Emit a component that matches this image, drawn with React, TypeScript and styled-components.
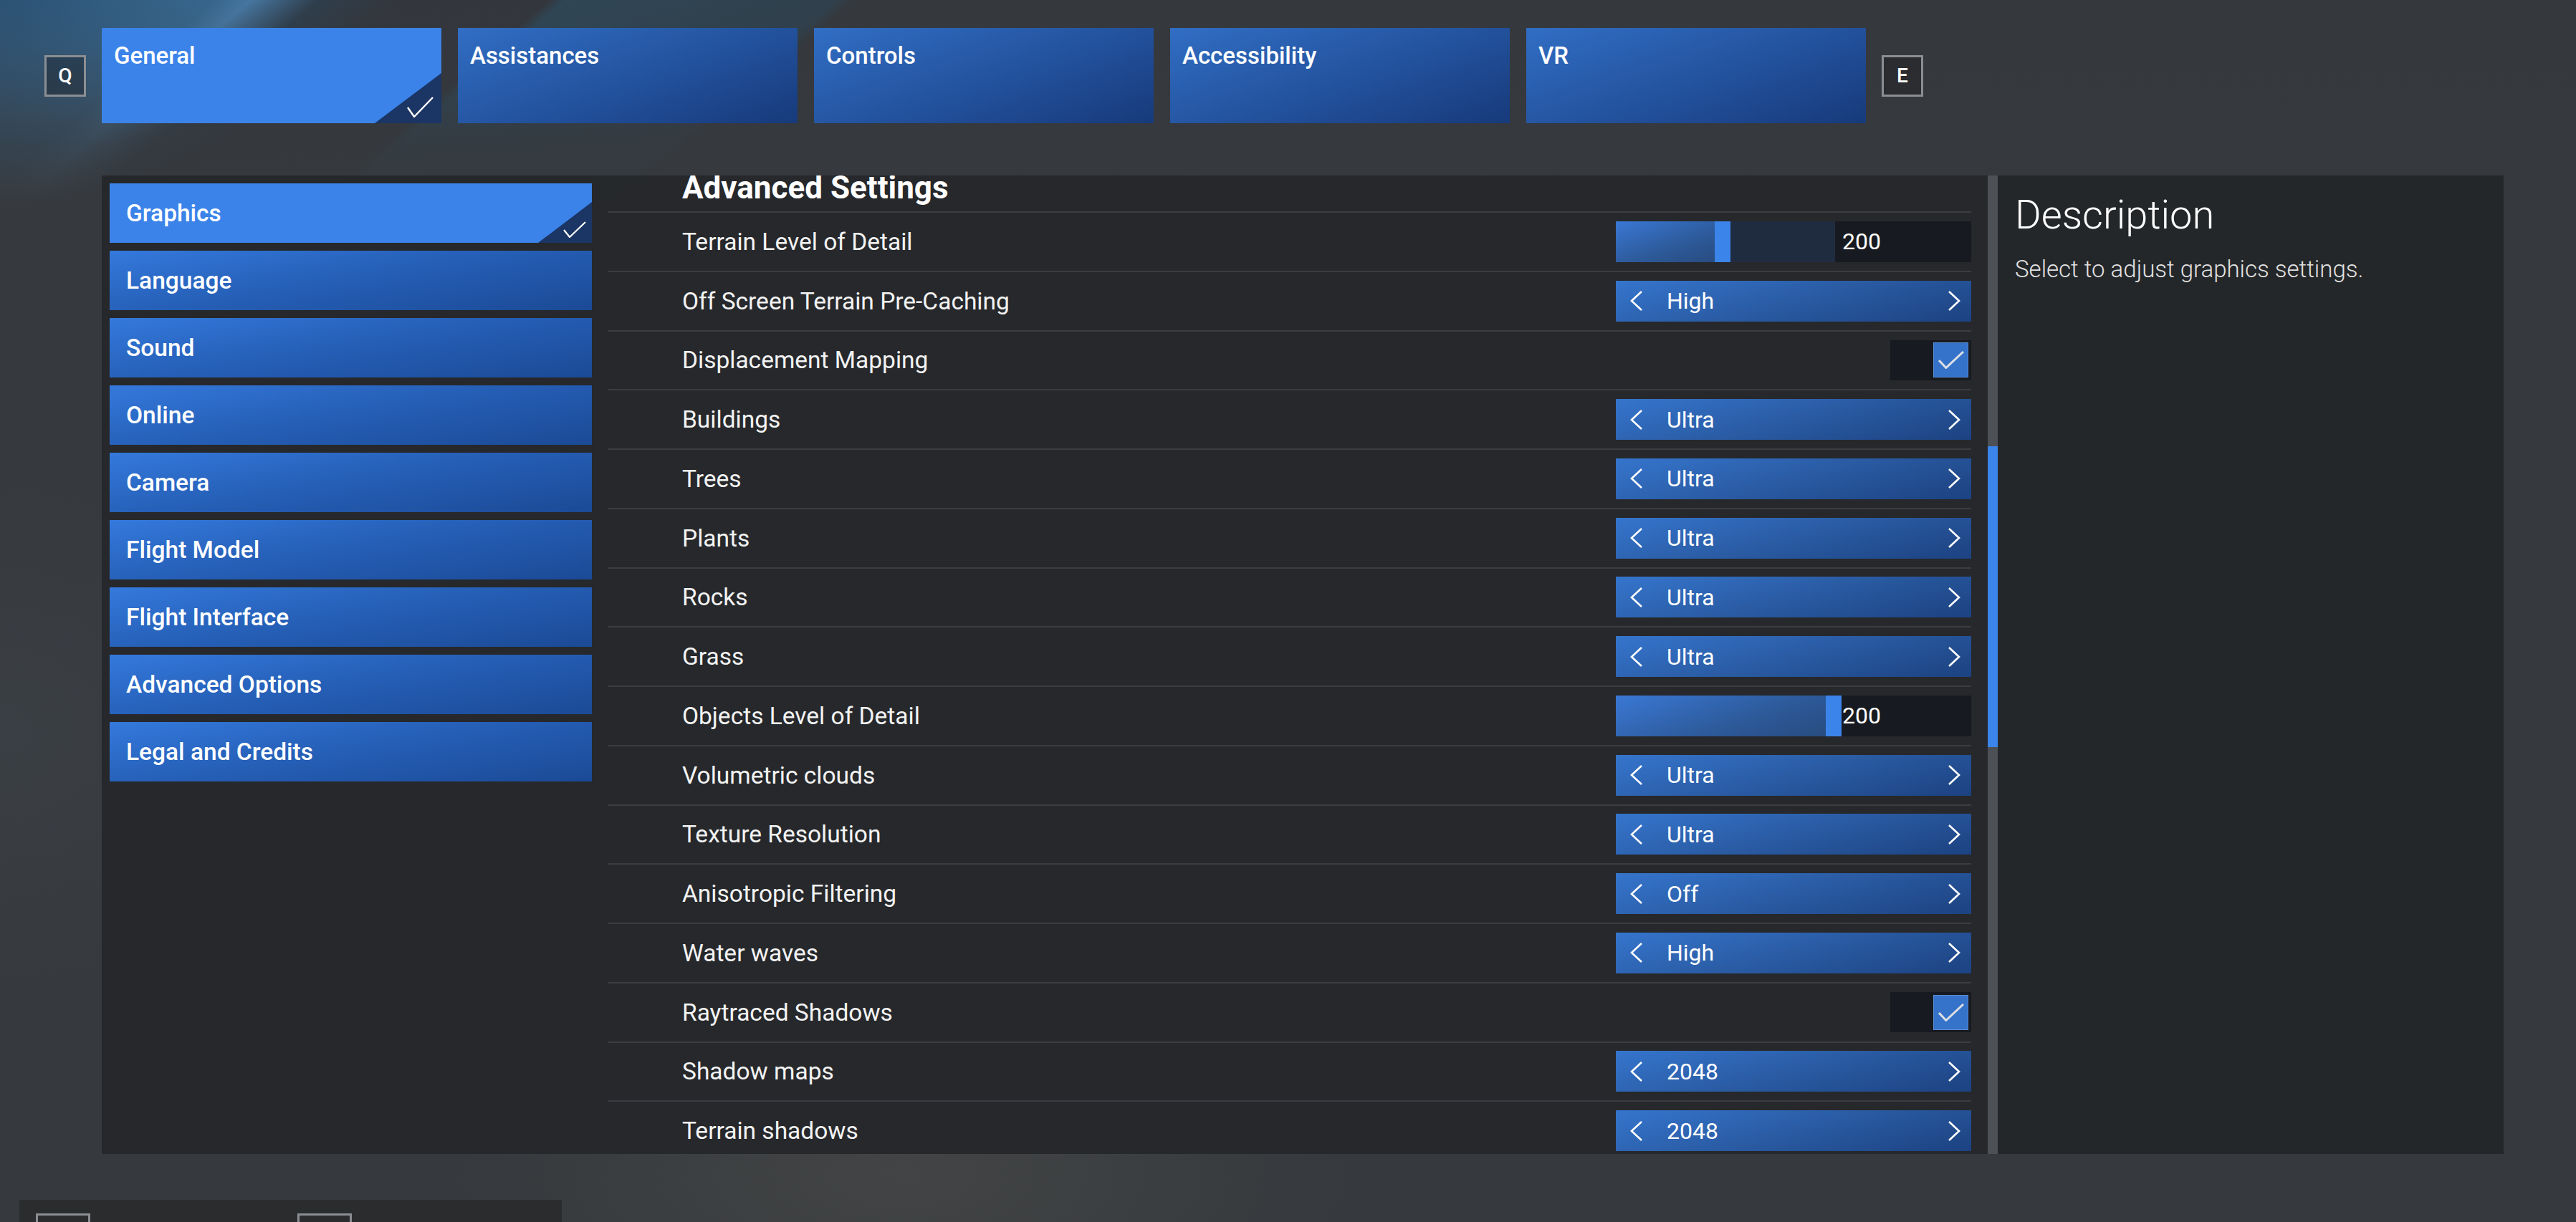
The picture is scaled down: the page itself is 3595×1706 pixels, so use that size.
import * as React from 'react';
import styled, { createGlobalStyle } from 'styled-components';

const GlobalStyle = createGlobalStyle`
  html, body {
    margin: 0;
    padding: 0;
  }
  body {
    background: #36393d;
    font-family: Roboto, 'Liberation Sans', sans-serif;
    color: #fff;
    overflow: hidden;
  }
`;

const Screen = styled.div`
  width: 3595px;
  height: 1706px;
  overflow: hidden;
  display: flex;
  flex-direction: column;
  background:
    radial-gradient(ellipse 900px 420px at 35% 96%, rgba(92, 92, 86, 0.32), transparent 70%),
    radial-gradient(ellipse 700px 300px at 52% 25%, rgba(80, 80, 78, 0.22), transparent 70%),
    radial-gradient(ellipse 600px 500px at 0% 60%, rgba(70, 78, 86, 0.3), transparent 70%),
    linear-gradient(180deg, rgba(54, 57, 61, 0) 0px, rgba(54, 57, 61, 0.15) 60px, rgba(54, 57, 61, 0.75) 200px, #36393d 290px),
    linear-gradient(
      139deg,
      #2c5273 0%,
      #37668d 5.4%,
      #4676a0 6.3%,
      #2f3e4c 8%,
      #33373d 10%,
      #33373d 13.8%,
      #2f4656 14.2%,
      #30404c 21%,
      #35383c 21.5%,
      #35383c 100%
    );
`;

/* ---------- top tabs ---------- */

const TopBar = styled.div`
  display: flex;
  align-items: center;
  gap: 22px;
  padding: 39px 0 0 62px;
`;

const KeyBox = styled.div`
  width: 58px;
  height: 58px;
  box-sizing: border-box;
  border: 3px solid #8b8e92;
  background: rgba(22, 24, 27, 0.35);
  display: flex;
  align-items: center;
  justify-content: center;
  font-size: 28px;
  font-weight: 500;
  color: #fff;
`;

const TabRow = styled.div`
  display: flex;
  gap: 23px;
`;

const Tab = styled.div<{ $active?: boolean }>`
  position: relative;
  width: 474px;
  height: 133px;
  box-sizing: border-box;
  padding: 19px 17px;
  font-size: 33px;
  font-weight: 500;
  line-height: 1.2;
  color: #fff;
  background: ${(p) =>
    p.$active ? '#3b83e9' : 'linear-gradient(160deg, #316ec4 0%, #2454a0 50%, #173a7b 100%)'};
  overflow: hidden;
`;

const Corner = styled.div<{ $w: number; $h: number }>`
  position: absolute;
  right: 0;
  bottom: 0;
  width: ${(p) => p.$w}px;
  height: ${(p) => p.$h}px;
  background: #1b3564;
  clip-path: polygon(100% 0, 100% 100%, 0 100%);
`;

const CornerCheck = styled.svg<{ $r: number; $b: number }>`
  position: absolute;
  right: ${(p) => p.$r}px;
  bottom: ${(p) => p.$b}px;
`;

/* ---------- main area ---------- */

const Main = styled.div`
  display: flex;
  margin: 73px 0 0 142px;
  height: 1366px;
`;

const Panel = styled.div`
  display: flex;
  width: 2646px;
  background: rgba(37, 39, 42, 0.93);
`;

const Nav = styled.nav`
  width: 706px;
  box-sizing: border-box;
  padding: 11px 22px 0 11px;
  display: flex;
  flex-direction: column;
  gap: 11px;
`;

const NavItem = styled.div<{ $active?: boolean }>`
  position: relative;
  height: 83px;
  flex: 0 0 83px;
  display: flex;
  align-items: center;
  padding-left: 23px;
  font-size: 33.5px;
  font-weight: 500;
  color: #fff;
  background: ${(p) =>
    p.$active ? '#3b83e9' : 'linear-gradient(170deg, #3479dc 0%, #2660b8 45%, #1b4a96 100%)'};
  overflow: hidden;
`;

const Settings = styled.div`
  width: 1903px;
  overflow: hidden;
  display: flex;
  flex-direction: column;
`;

const SectionHeader = styled.div`
  height: 50px;
  flex: 0 0 50px;
  overflow: hidden;
  border-bottom: 2px solid #3b3e42;
  padding-left: 104px;
`;

const SectionTitle = styled.div`
  margin-top: -5px;
  font-size: 44px;
  line-height: 44px;
  font-weight: 700;
  color: #fff;
`;

const Row = styled.div`
  height: 80.75px;
  flex: 0 0 80.75px;
  border-bottom: 2px solid #3a3d41;
  display: flex;
  align-items: center;
  justify-content: space-between;
  padding-left: 104px;
  font-size: 33.5px;
  color: #f3f3f3;
`;

const Selector = styled.div`
  width: 496px;
  height: 57px;
  box-sizing: border-box;
  display: flex;
  align-items: center;
  padding: 0 15px 0 20px;
  background: linear-gradient(165deg, #3575cd 0%, #2a5ba3 50%, #1c4281 100%);
`;

const SelectValue = styled.span`
  flex: 1;
  margin-left: 33px;
  font-size: 32px;
  color: #fff;
`;

const Slider = styled.div`
  width: 496px;
  height: 57px;
  display: flex;
`;

const Track = styled.div`
  position: relative;
  z-index: 1;
  flex: 0 0 306px;
  background: #1f2c40;
`;

const Fill = styled.div`
  position: absolute;
  left: 0;
  top: 0;
  bottom: 0;
  background: linear-gradient(160deg, #3a78d5 0%, #2d5a9a 60%, #284c80 100%);
`;

const Thumb = styled.div`
  position: absolute;
  top: 0;
  bottom: 0;
  width: 22px;
  background: #3b84ea;
`;

const ValueBox = styled.div`
  flex: 1;
  display: flex;
  align-items: center;
  padding-left: 10px;
  background: #171a20;
  font-size: 32px;
  color: #fff;
`;

const CheckWell = styled.div`
  width: 113px;
  height: 56px;
  box-sizing: border-box;
  padding-right: 4px;
  display: flex;
  align-items: center;
  justify-content: flex-end;
  background: #171a20;
`;

const CheckBox = styled.div`
  width: 49px;
  height: 49px;
  box-sizing: border-box;
  border: 1px solid #5d8ed6;
  background: #3572ca;
  display: flex;
  align-items: center;
  justify-content: center;
`;

const ScrollTrack = styled.div`
  margin-left: 23px;
  width: 14px;
  flex: 0 0 14px;
  background: #4d5054;
`;

const ScrollThumb = styled.div<{ $top: number; $h: number }>`
  margin-top: ${(p) => p.$top}px;
  height: ${(p) => p.$h}px;
  background: #3b84ea;
`;

const Description = styled.aside`
  width: 706px;
  box-sizing: border-box;
  padding: 22px 24px;
  background: rgba(36, 38, 41, 0.95);
`;

const DescTitle = styled.div`
  font-size: 56px;
  font-weight: 300;
  line-height: 1.2;
  color: #fff;
`;

const DescText = styled.div`
  margin-top: 22px;
  font-size: 33px;
  font-weight: 300;
  line-height: 1.2;
  color: #e2e2e2;
`;

/* ---------- bottom bar ---------- */

const BottomBar = styled.div`
  margin: 64px 0 0 27px;
  width: 757px;
  height: 80px;
  box-sizing: border-box;
  padding: 19px 0 0 23px;
  display: flex;
  gap: 289px;
  background: #2a2c2e;
`;

const BottomKey = styled.div`
  width: 76px;
  height: 60px;
  box-sizing: border-box;
  border: 3px solid #8b8e92;
`;

/* ---------- parts ---------- */

const Chevron: React.FC<{ dir: 'left' | 'right' }> = ({ dir }) => (
  <svg width="18" height="28" viewBox="0 0 18 28">
    <polyline
      points={dir === 'left' ? '16,1 2,14 16,27' : '2,1 16,14 2,27'}
      fill="none"
      stroke="#fff"
      strokeWidth="2.6"
    />
  </svg>
);

const Tick: React.FC<{ w: number; h: number; color?: string; sw?: number }> = ({ w, h, color = '#fff', sw = 2.5 }) => (
  <svg width={w} height={h} viewBox={`0 0 ${w} ${h}`}>
    <polyline
      points={`1,${h * 0.52} ${w * 0.3},${h - 1.5} ${w - 1},1`}
      fill="none"
      stroke={color}
      strokeWidth={sw}
    />
  </svg>
);

type Setting =
  | { label: string; kind: 'select'; value: string }
  | { label: string; kind: 'slider'; value: string; thumb: number }
  | { label: string; kind: 'check' };

const settings: Setting[] = [
  { label: 'Terrain Level of Detail', kind: 'slider', value: '200', thumb: 138 },
  { label: 'Off Screen Terrain Pre-Caching', kind: 'select', value: 'High' },
  { label: 'Displacement Mapping', kind: 'check' },
  { label: 'Buildings', kind: 'select', value: 'Ultra' },
  { label: 'Trees', kind: 'select', value: 'Ultra' },
  { label: 'Plants', kind: 'select', value: 'Ultra' },
  { label: 'Rocks', kind: 'select', value: 'Ultra' },
  { label: 'Grass', kind: 'select', value: 'Ultra' },
  { label: 'Objects Level of Detail', kind: 'slider', value: '200', thumb: 293 },
  { label: 'Volumetric clouds', kind: 'select', value: 'Ultra' },
  { label: 'Texture Resolution', kind: 'select', value: 'Ultra' },
  { label: 'Anisotropic Filtering', kind: 'select', value: 'Off' },
  { label: 'Water waves', kind: 'select', value: 'High' },
  { label: 'Raytraced Shadows', kind: 'check' },
  { label: 'Shadow maps', kind: 'select', value: '2048' },
  { label: 'Terrain shadows', kind: 'select', value: '2048' },
];

const tabs = ['General', 'Assistances', 'Controls', 'Accessibility', 'VR'];
const navItems = [
  'Graphics',
  'Language',
  'Sound',
  'Online',
  'Camera',
  'Flight Model',
  'Flight Interface',
  'Advanced Options',
  'Legal and Credits',
];

const Control: React.FC<{ s: Setting }> = ({ s }) => {
  if (s.kind === 'select') {
    return (
      <Selector>
        <Chevron dir="left" />
        <SelectValue>{s.value}</SelectValue>
        <Chevron dir="right" />
      </Selector>
    );
  }
  if (s.kind === 'slider') {
    return (
      <Slider>
        <Track>
          <Fill style={{ width: s.thumb }} />
          <Thumb style={{ left: s.thumb }} />
        </Track>
        <ValueBox>{s.value}</ValueBox>
      </Slider>
    );
  }
  return (
    <CheckWell>
      <CheckBox>
        <Tick w={36} h={25} color="#dcdfe4" sw={3} />
      </CheckBox>
    </CheckWell>
  );
};

const App: React.FC = () => {
  return (
    <>
      <GlobalStyle />
      <Screen>
        <TopBar>
          <KeyBox>Q</KeyBox>
          <TabRow>
            {tabs.map((t, i) => (
              <Tab key={t} $active={i === 0}>
                {t}
                {i === 0 && (
                  <>
                    <Corner $w={93} $h={70} />
                    <CornerCheck $r={11} $b={8} width="37" height="29" viewBox="0 0 37 29">
                      <polyline points="1,15 10,28 36,1" fill="none" stroke="#fff" strokeWidth="2.4" />
                    </CornerCheck>
                  </>
                )}
              </Tab>
            ))}
          </TabRow>
          <KeyBox>E</KeyBox>
        </TopBar>

        <Main>
          <Panel>
            <Nav>
              {navItems.map((n, i) => (
                <NavItem key={n} $active={i === 0}>
                  {n}
                  {i === 0 && (
                    <>
                      <Corner $w={75} $h={57} />
                      <CornerCheck $r={8} $b={7} width="32" height="23" viewBox="0 0 32 23">
                        <polyline points="1,12 9,22 31,1" fill="none" stroke="#fff" strokeWidth="2.2" />
                      </CornerCheck>
                    </>
                  )}
                </NavItem>
              ))}
            </Nav>

            <Settings>
              <SectionHeader>
                <SectionTitle>Advanced Settings</SectionTitle>
              </SectionHeader>
              {settings.map((s) => (
                <Row key={s.label}>
                  <span>{s.label}</span>
                  <Control s={s} />
                </Row>
              ))}
            </Settings>

            <ScrollTrack>
              <ScrollThumb $top={378} $h={420} />
            </ScrollTrack>
          </Panel>

          <Description>
            <DescTitle>Description</DescTitle>
            <DescText>Select to adjust graphics settings.</DescText>
          </Description>
        </Main>

        <BottomBar>
          <BottomKey />
          <BottomKey />
        </BottomBar>
      </Screen>
    </>
  );
};

export default App;
